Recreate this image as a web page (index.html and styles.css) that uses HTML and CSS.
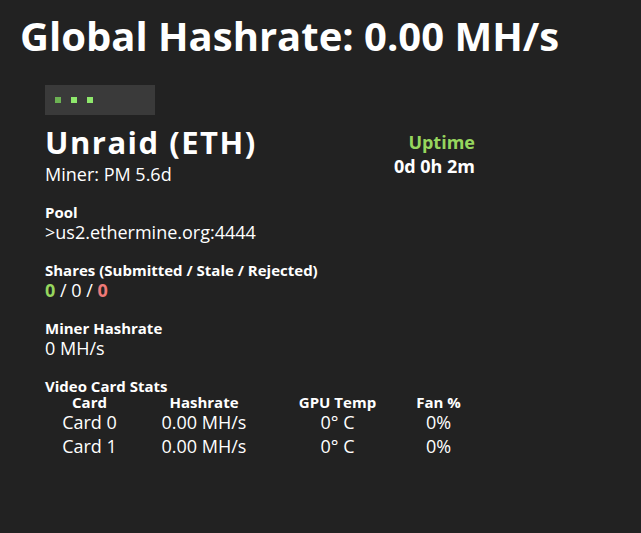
FILE: index.html
```html
<!DOCTYPE html>
<html lang="en">
<head>
  <meta charset="UTF-8">
  <meta name="viewport" content="width=device-width, initial-scale=1.0">
  <title>Miner Dashboard</title>
  <link rel="stylesheet" href="styles.css">
</head>
<body>
  <h1 class="global">Global Hashrate: 0.00 MH/s</h1>
  <div class="miner">
    <div class="status">
      <span class="dot dim"></span>
      <span class="dot"></span>
      <span class="dot"></span>
    </div>
    <div class="head">
      <div class="name">
        <h2>Unraid (ETH)</h2>
        <div class="value">Miner: PM 5.6d</div>
      </div>
      <div class="uptime">
        <div class="uptime-label">Uptime</div>
        <div class="uptime-value">0d 0h 2m</div>
      </div>
    </div>
    <div class="field">
      <div class="label">Pool</div>
      <div class="value">&gt;us2.ethermine.org:4444</div>
    </div>
    <div class="field">
      <div class="label">Shares (Submitted / Stale / Rejected)</div>
      <div class="value"><span class="good">0</span> / 0 / <span class="bad">0</span></div>
    </div>
    <div class="field">
      <div class="label">Miner Hashrate</div>
      <div class="value">0 MH/s</div>
    </div>
    <div class="field cards">
      <div class="label">Video Card Stats</div>
      <table>
        <tr><th>Card</th><th>Hashrate</th><th>GPU Temp</th><th>Fan %</th></tr>
        <tr><td>Card 0</td><td>0.00 MH/s</td><td>0&deg; C</td><td>0%</td></tr>
        <tr><td>Card 1</td><td>0.00 MH/s</td><td>0&deg; C</td><td>0%</td></tr>
      </table>
    </div>
  </div>
</body>
</html>
```
FILE: styles.css
```css
html, body {
  margin: 0;
  background: #222;
  color: #fff;
  font-family: "Open Sans", "Liberation Sans", sans-serif;
}
body {
  padding: 11px 20px;
}
.global {
  margin: 0;
  font-size: 40px;
  line-height: 50px;
  font-weight: 700;
}
.miner {
  padding: 24px 25px 0;
}
/* connection lights */
.status {
  width: 110px;
  height: 30px;
  background: #3a3a3a;
  display: flex;
  align-items: center;
  gap: 10px;
  padding-left: 10px;
  box-sizing: border-box;
}
.dot {
  width: 6px;
  height: 6px;
  background: #8ee86c;
}
.dot.dim {
  background: #6cb253;
}
.head {
  display: flex;
  justify-content: space-between;
  width: 430px;
  margin-top: 7px;
}
.name h2 {
  margin: 0;
  font-size: 31px;
  line-height: 40px;
  font-weight: 700;
  letter-spacing: 1.5px;
}
.name .value {
  line-height: 24px;
}
.uptime {
  text-align: right;
  margin-top: 8px;
  font-weight: 700;
  font-size: 18px;
  line-height: 24px;
}
.uptime-label {
  color: #96d65e;
}
.label {
  font-size: 15px;
  font-weight: 700;
  line-height: 18px;
}
.value {
  font-size: 18px;
  line-height: 22px;
}
.field {
  margin-top: 18px;
}
.head + .field {
  margin-top: 17px;
}
.good {
  color: #96d65e;
  font-weight: 700;
}
.bad {
  color: #ee7a78;
  font-weight: 700;
}
table {
  border-collapse: collapse;
}
th {
  font-size: 15px;
  font-weight: 700;
  line-height: 15px;
  padding: 0;
  text-align: center;
}
td {
  font-size: 18px;
  line-height: 24px;
  padding: 0;
  text-align: center;
}
th:nth-child(1) { width: 89px; }
th:nth-child(2) { width: 140px; }
th:nth-child(3) { width: 127px; }
th:nth-child(4) { width: 75px; }
```
